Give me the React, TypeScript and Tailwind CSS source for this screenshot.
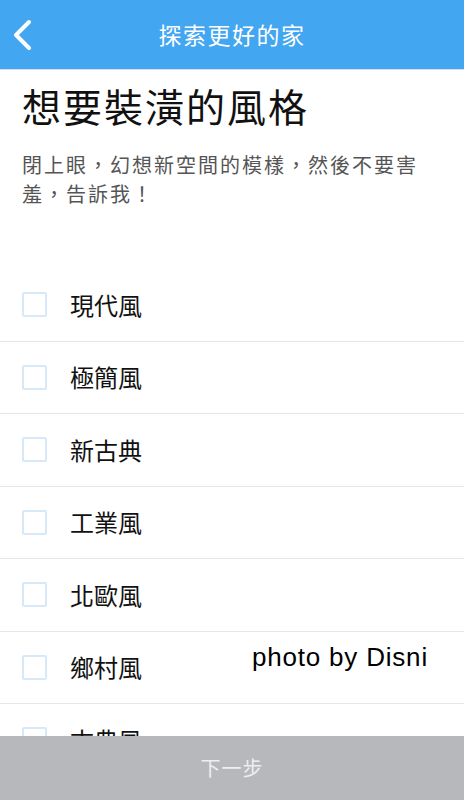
import React, { useState } from 'react';

const styles = ['現代風', '極簡風', '新古典', '工業風', '北歐風', '鄉村風', '古典風'];

const font = { fontFamily: '"Noto Sans CJK TC", "Noto Sans", sans-serif' };

export default function App() {
  const [checked, setChecked] = useState<string[]>([]);

  const toggle = (name: string) => {
    setChecked((prev) => (prev.includes(name) ? prev.filter((n) => n !== name) : [...prev, name]));
  };

  return (
    <div className="relative flex h-[800px] w-[464px] flex-col overflow-hidden bg-white" style={font}>
      {/* header */}
      <div className="flex h-[70px] shrink-0 items-center bg-[#43a6f0] border-b border-[#d9dde2]">
        <button className="flex h-full w-[52px] items-center justify-start pl-[11px]">
          <svg width="22" height="34" viewBox="0 0 22 34" fill="none">
            <path d="M18 4 L5 17 L18 30" stroke="white" strokeWidth="4" strokeLinecap="round" strokeLinejoin="round" />
          </svg>
        </button>
        <div className="flex-1 text-center text-[23px] tracking-[1.5px] text-white pr-[52px]">探索更好的家</div>
      </div>

      <div className="flex-1 overflow-hidden">
        <div className="px-[22px] pt-[9px]">
          <h1 className="text-[39px] leading-[52px] tracking-[2px] text-[#111]">想要裝潢的風格</h1>
          <p className="mt-[19px] text-[20px] leading-[29px] tracking-[2px] text-[#555]">
            閉上眼，幻想新空間的模樣，然後不要害羞，告訴我！
          </p>
        </div>

        <ul className="mt-[61px]">
          {styles.map((name) => (
            <li
              key={name}
              onClick={() => toggle(name)}
              className="flex h-[72.5px] cursor-pointer items-center border-b border-[#e6e7e9] pl-[22px]"
            >
              <span className="flex h-[25px] w-[25px] items-center justify-center border-2 border-[#d7e9f8] rounded-[2px]">
                {checked.includes(name) && <span className="h-[13px] w-[13px] bg-[#43a6f0]" />}
              </span>
              <span className="ml-[23px] text-[24px] text-[#111]">{name}</span>
            </li>
          ))}
        </ul>
      </div>

      {/* footer */}
      <button className="flex h-[64px] shrink-0 items-center justify-center bg-[#b7b8bc] text-[20px] tracking-[1px] text-[#eeeef0]">
        下一步
      </button>

      <div
        className="pointer-events-none absolute left-[252px] top-[638px] text-[26px] tracking-[0.8px] text-black"
        style={{ fontFamily: '"Liberation Sans", Arial, sans-serif', textShadow: '0 0 2px #fff, 0 0 2px #fff' }}
      >
        photo by Disni
      </div>
    </div>
  );
}
